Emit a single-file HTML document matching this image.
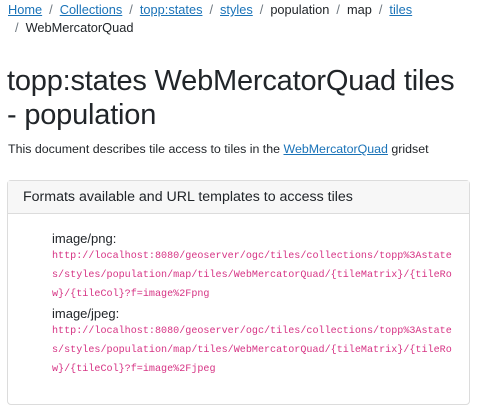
<!DOCTYPE html>
<html><head><meta charset="utf-8"><style>
body{margin:0;background:#fff;font-family:"Liberation Sans",sans-serif;color:#212529;width:481px;height:410px;overflow:hidden;position:relative}
a{color:#1a73b8;text-decoration:underline}
.bc{position:absolute;left:8px;top:1px;font-size:12.8px;line-height:18px;width:470px}
.bc .s{color:#6c757d;padding:0 7px}
h1{position:absolute;left:7px;top:64px;margin:0;font-weight:400;font-size:29px;line-height:34px;width:470px;color:#212529;letter-spacing:-0.2px;white-space:nowrap}
p{position:absolute;left:8px;top:141px;margin:0;font-size:12.4px;line-height:17px}
.card{position:absolute;left:7px;top:180px;width:463px;height:225px;border:1px solid #dcdcdc;border-radius:4px;box-sizing:border-box}
.hd{height:32px;background:#f7f7f7;border-bottom:1px solid #dcdcdc;font-size:14.2px;line-height:32px;padding-left:15px}
.bd{position:absolute;left:44px;top:48px;width:410px}
.lbl{font-size:13px;line-height:19px;height:18px}
code{display:block;font-family:"Liberation Mono",monospace;font-size:10.1px;color:#d63384;line-height:19px;white-space:nowrap}
</style></head><body>
<div class="bc"><a href="#">Home</a><span class="s">/</span><a href="#">Collections</a><span class="s">/</span><a href="#">topp:states</a><span class="s">/</span><a href="#">styles</a><span class="s">/</span>population<span class="s">/</span>map<span class="s">/</span><a href="#">tiles</a><br><span class="s">/</span>WebMercatorQuad</div>
<h1>topp:states WebMercatorQuad tiles<br>- population</h1>
<p>This document describes tile access to tiles in the <a href="#">WebMercatorQuad</a> gridset</p>
<div class="card"><div class="hd">Formats available and URL templates to access tiles</div>
<div class="bd">
<div class="lbl">image/png:</div>
<code>http://localhost:8080/geoserver/ogc/tiles/collections/topp%3Astate<br>s/styles/population/map/tiles/WebMercatorQuad/{tileMatrix}/{tileRo<br>w}/{tileCol}?f=image%2Fpng</code>
<div class="lbl">image/jpeg:</div>
<code>http://localhost:8080/geoserver/ogc/tiles/collections/topp%3Astate<br>s/styles/population/map/tiles/WebMercatorQuad/{tileMatrix}/{tileRo<br>w}/{tileCol}?f=image%2Fjpeg</code>
</div></div>
</body></html>
